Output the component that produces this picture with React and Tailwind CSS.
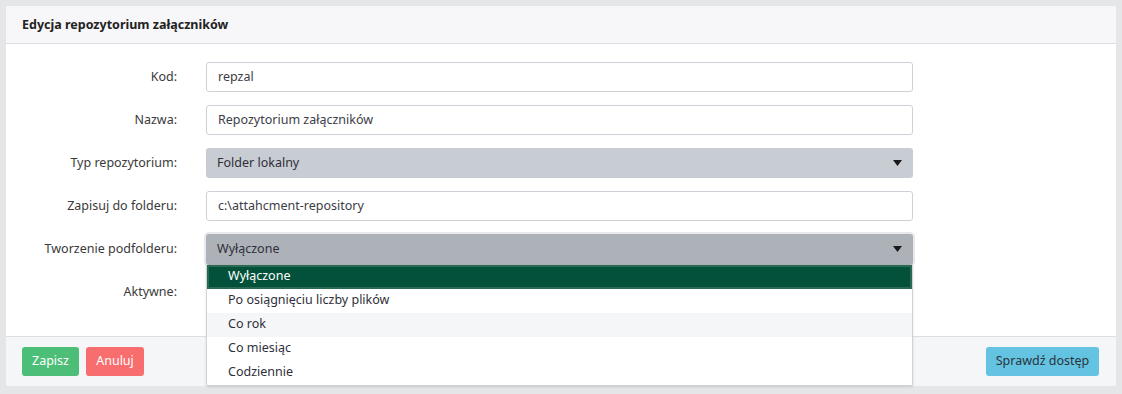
import React from "react";

const font = { fontFamily: '"Noto Sans", "Open Sans", sans-serif' };

function Arrow() {
  return (
    <svg width="9" height="6" viewBox="0 0 9 6" className="absolute right-[11px] top-1/2 -translate-y-1/2">
      <path d="M0 0 L9 0 L4.5 6 Z" fill="#1a1a1a" />
    </svg>
  );
}

function Row({ label, children }) {
  return (
    <div className="flex items-center h-[30px]">
      <div className="w-[155px] text-right text-[#3a3a3a]">{label}</div>
      <div className="ml-[29px] w-[707px] relative">{children}</div>
    </div>
  );
}

function TextInput({ value }) {
  return (
    <div className="h-[30px] border border-[#ced2d8] rounded-[3px] bg-white px-[11px] flex items-center text-[#3d3d46]">
      {value}
    </div>
  );
}

const options = ["Wyłączone", "Po osiągnięciu liczby plików", "Co rok", "Co miesiąc", "Codziennie"];

export default function App() {
  return (
    <div className="bg-[#e5e6e8] p-[6px] h-[394px] text-[12.5px]" style={font}>
      <div className="bg-white rounded-[3px] h-[380px] flex flex-col">
        <div className="h-[38px] shrink-0 bg-[#f7f7f9] border-b border-[#dcdee2] flex items-center px-4 pt-[1px] font-bold text-[#222] rounded-t-[3px]">
          Edycja repozytorium załączników
        </div>
        <div className="flex-1 px-4 pt-[18px] flex flex-col gap-[13px]">
          <Row label="Kod:">
            <TextInput value="repzal" />
          </Row>
          <Row label="Nazwa:">
            <TextInput value="Repozytorium załączników" />
          </Row>
          <Row label="Typ repozytorium:">
            <div className="h-[30px] rounded-[3px] bg-[#c8ccd3] px-[11px] flex items-center text-[#2f2f3a] relative">
              Folder lokalny
              <Arrow />
            </div>
          </Row>
          <Row label="Zapisuj do folderu:">
            <TextInput value="c:\attahcment-repository" />
          </Row>
          <Row label="Tworzenie podfolderu:">
            <div className="h-[31px] rounded-[3px] bg-[#adb2b9] px-[11px] flex items-center text-[#2f2f3a] relative ring-2 ring-[#e6e8eb]">
              Wyłączone
              <Arrow />
            </div>
            <div className="absolute left-0 top-[31px] w-full bg-white border border-[#cfd2d6] border-t-0 shadow-sm z-10 rounded-b-[2px]">
              {options.map((o, i) => (
                <div
                  key={o}
                  className={
                    i === 0
                      ? "h-[24px] flex items-center px-[19px] bg-[#03513a] text-white border-2 border-[#2b6a52]"
                      : i === 2
                      ? "h-[24px] flex items-center px-[21px] bg-[#f5f6f8] text-[#2f2f3a]"
                      : "h-[24px] flex items-center px-[21px] text-[#2f2f3a]"
                  }
                >
                  {o}
                </div>
              ))}
            </div>
          </Row>
          <Row label="Aktywne:">
            <div />
          </Row>
        </div>
        <div className="h-[50px] shrink-0 bg-[#f5f6f8] border-t border-[#dcdee2] pl-4 pr-[17px] flex items-center justify-between rounded-b-[3px]">
          <div className="flex gap-[7px]">
            <button className="h-[29px] w-[57px] rounded-[3px] bg-[#4cbe77] text-white">Zapisz</button>
            <button className="h-[29px] w-[58px] rounded-[3px] bg-[#f86d6d] text-white">Anuluj</button>
          </div>
          <button className="h-[29px] w-[113px] rounded-[3px] bg-[#63c3e0] text-[#2b3440]">Sprawdź dostęp</button>
        </div>
      </div>
    </div>
  );
}
